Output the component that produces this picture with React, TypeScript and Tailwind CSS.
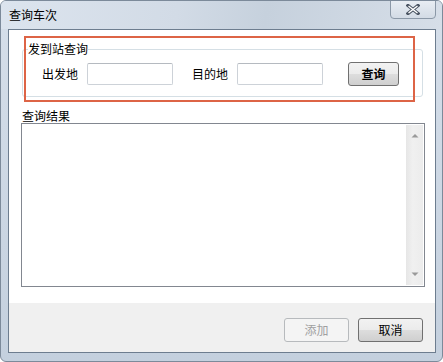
import React from "react";

const font = { fontFamily: '"Noto Sans CJK SC", "Noto Sans", sans-serif' };

function Btn({ children, disabled, bold }: { children: React.ReactNode; disabled?: boolean; bold?: boolean }) {
  if (disabled) {
    return (
      <div className="w-[65px] h-[24px] rounded-[3px] border border-[#b7babd] bg-[#f4f4f4] flex items-center justify-center text-[12px] leading-[14px] text-[#a0a0a0]">
        {children}
      </div>
    );
  }
  return (
    <div
      className={`h-[24px] rounded-[3px] border border-[#707070] bg-[linear-gradient(to_bottom,#f2f2f2_0%,#ebebeb_50%,#dddddd_51%,#cfcfcf_100%)] flex items-center justify-center text-[12px] leading-[14px] text-black ${bold ? "font-bold" : ""}`}
    >
      {children}
    </div>
  );
}

export default function App() {
  return (
    <div style={font} className="relative w-[443px] h-[362px] flex flex-col bg-[linear-gradient(to_bottom,#d6dfea,#c4d0de)] rounded-t-[6px] rounded-b-[6px] border border-[#7c8a9a] overflow-hidden">
      {/* Title bar */}
      <div className="h-[28px] flex justify-between bg-[linear-gradient(100deg,#dce4ee_0%,#d2dbe6_40%,#c6d1dd_60%,#d6dee8_100%)]">
        <div className="pl-[8px] pt-[7px] text-[12px] leading-[14px] text-black">查询车次</div>
        <div className="mr-[6px] w-[46px] h-[19px] -mt-[1px] rounded-b-[4px] border border-[#8b98a7] bg-[linear-gradient(to_bottom,#e8edf3,#d3dbe5)] flex items-center justify-center">
          <svg width="14" height="11" viewBox="0 0 14 11">
            <path d="M2 1.5 L12 9.5 M12 1.5 L2 9.5" stroke="#4b5563" strokeWidth="3.4" strokeLinecap="square" />
            <path d="M2.5 2 L11.5 9 M11.5 2 L2.5 9" stroke="#ffffff" strokeWidth="1.4" />
          </svg>
        </div>
      </div>

      {/* Client area */}
      <div className="ml-[7px] mr-[6px] flex-1 border border-[#6d7d8f] flex flex-col">
        <div className="h-[273px] bg-white flex flex-col">
          {/* group box */}
          <div className="relative mt-[19px] ml-[13px] w-[401px] h-[48px] border border-[#d5dfe5] rounded-[3px]">
            <div className="absolute left-[5px] -top-[8px] bg-white text-[12px] leading-[14px] text-black">发到站查询</div>
            <div className="flex items-center pt-[12px] pl-[19px] h-[36px]">
              <span className="text-[12px] leading-[14px] text-black">出发地</span>
              <div className="ml-[9px] w-[86px] h-[22px] rounded-[2px] border border-[#cdd2d8] border-t-[#b5bac0] bg-white" />
              <span className="ml-[19px] text-[12px] leading-[14px] text-black">目的地</span>
              <div className="ml-[9px] w-[86px] h-[22px] rounded-[2px] border border-[#cdd2d8] border-t-[#b5bac0] bg-white" />
              <div className="ml-[25px] w-[51px]">
                <Btn bold>查询</Btn>
              </div>
            </div>
          </div>

          <div className="mt-[12px] ml-[13px] text-[12px] leading-[14px] text-black">查询结果</div>
          <div className="ml-[12px] w-[404px] h-[164px] border border-[#828790] bg-white flex justify-end">
            <div className="w-[17px] my-[1px] mr-[1px] bg-[linear-gradient(to_right,#e6e6e6,#f0f0f0_40%,#ececec)] flex flex-col items-center justify-between py-[8px]">
              <svg width="8" height="5" viewBox="0 0 8 5"><path d="M0.5 4.5 L4 1 L7.5 4.5 Z" fill="#9a9a9a" /></svg>
              <svg width="8" height="5" viewBox="0 0 8 5"><path d="M0.5 0.5 L4 4 L7.5 0.5 Z" fill="#9a9a9a" /></svg>
            </div>
          </div>
        </div>
        <div className="flex-1 bg-[#f0f0f0] flex justify-end items-start pt-[15px] pr-[12px] gap-[9px]">
          <Btn disabled>添加</Btn>
          <div className="w-[65px]">
            <Btn>取消</Btn>
          </div>
        </div>
      </div>
      <div className="h-[8px]" />

      {/* red annotation */}
      <div className="absolute left-[23px] top-[35px] w-[391px] h-[66px] border-2 border-[#dd6446]" />
    </div>
  );
}
